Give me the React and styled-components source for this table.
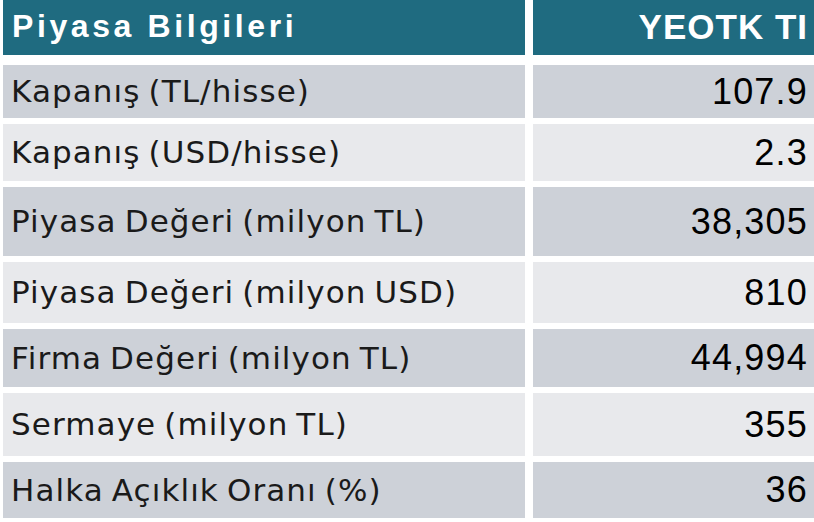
import React from "react";
import styled, { createGlobalStyle } from "styled-components";

const Global = createGlobalStyle`
  html, body { margin: 0; padding: 0; background: #ffffff; }
  body { width: 814px; height: 522px; overflow: hidden; }
`;

const Table = styled.div`
  display: flex;
  flex-direction: column;
  padding-left: 3px;
  width: 811px;
`;

const Row = styled.div`
  display: grid;
  grid-template-columns: 522px 281px;
  column-gap: 8px;
  height: ${(p) => p.$h}px;
  margin-top: ${(p) => p.$mt}px;
`;

const HeadCell = styled.div`
  background: #1f6b80;
  color: #ffffff;
  font-family: "Liberation Sans", Arial, sans-serif;
  font-weight: bold;
  display: flex;
  align-items: center;
  justify-content: ${(p) => (p.$right ? "flex-end" : "flex-start")};
  padding: ${(p) => (p.$right ? "0 6px 2px 0" : "0 0 2px 9px")};
  font-size: ${(p) => (p.$right ? "35px" : "32px")};
  letter-spacing: ${(p) => (p.$right ? "1px" : "3.6px")};
  white-space: nowrap;
`;

const Label = styled.div`
  background: ${(p) => (p.$alt ? "#e8e9ec" : "#cdd1d8")};
  color: #1a1a1a;
  font-family: "DejaVu Sans", sans-serif;
  font-size: 31px;
  letter-spacing: 1.1px;
  word-spacing: -3px;
  display: flex;
  align-items: center;
  padding: 0 0 1px 8px;
  white-space: nowrap;
`;

const Value = styled.div`
  background: ${(p) => (p.$alt ? "#e8e9ec" : "#cdd1d8")};
  color: #000000;
  font-family: "Liberation Sans", Arial, sans-serif;
  font-size: 36px;
  letter-spacing: 1.2px;
  display: flex;
  align-items: center;
  justify-content: flex-end;
  padding-right: 6px;
  white-space: nowrap;
`;

const rows = [
  { label: "Kapanış (TL/hisse)", value: "107.9", h: 53, mt: 10 },
  { label: "Kapanış (USD/hisse)", value: "2.3", h: 57, mt: 6 },
  { label: "Piyasa Değeri (milyon TL)", value: "38,305", h: 69, mt: 6 },
  { label: "Piyasa Değeri (milyon USD)", value: "810", h: 61, mt: 6 },
  { label: "Firma Değeri (milyon TL)", value: "44,994", h: 58, mt: 6 },
  { label: "Sermaye (milyon TL)", value: "355", h: 63, mt: 6 },
  { label: "Halka Açıklık Oranı (%)", value: "36", h: 56, mt: 6 },
];

export default function App() {
  return (
    <>
      <Global />
      <Table>
        <Row $h={55} $mt={0}>
          <HeadCell>Piyasa Bilgileri</HeadCell>
          <HeadCell $right>YEOTK TI</HeadCell>
        </Row>
        {rows.map((r, i) => (
          <Row key={r.label} $h={r.h} $mt={r.mt}>
            <Label $alt={i % 2 === 1}>{r.label}</Label>
            <Value $alt={i % 2 === 1}>{r.value}</Value>
          </Row>
        ))}
      </Table>
    </>
  );
}
